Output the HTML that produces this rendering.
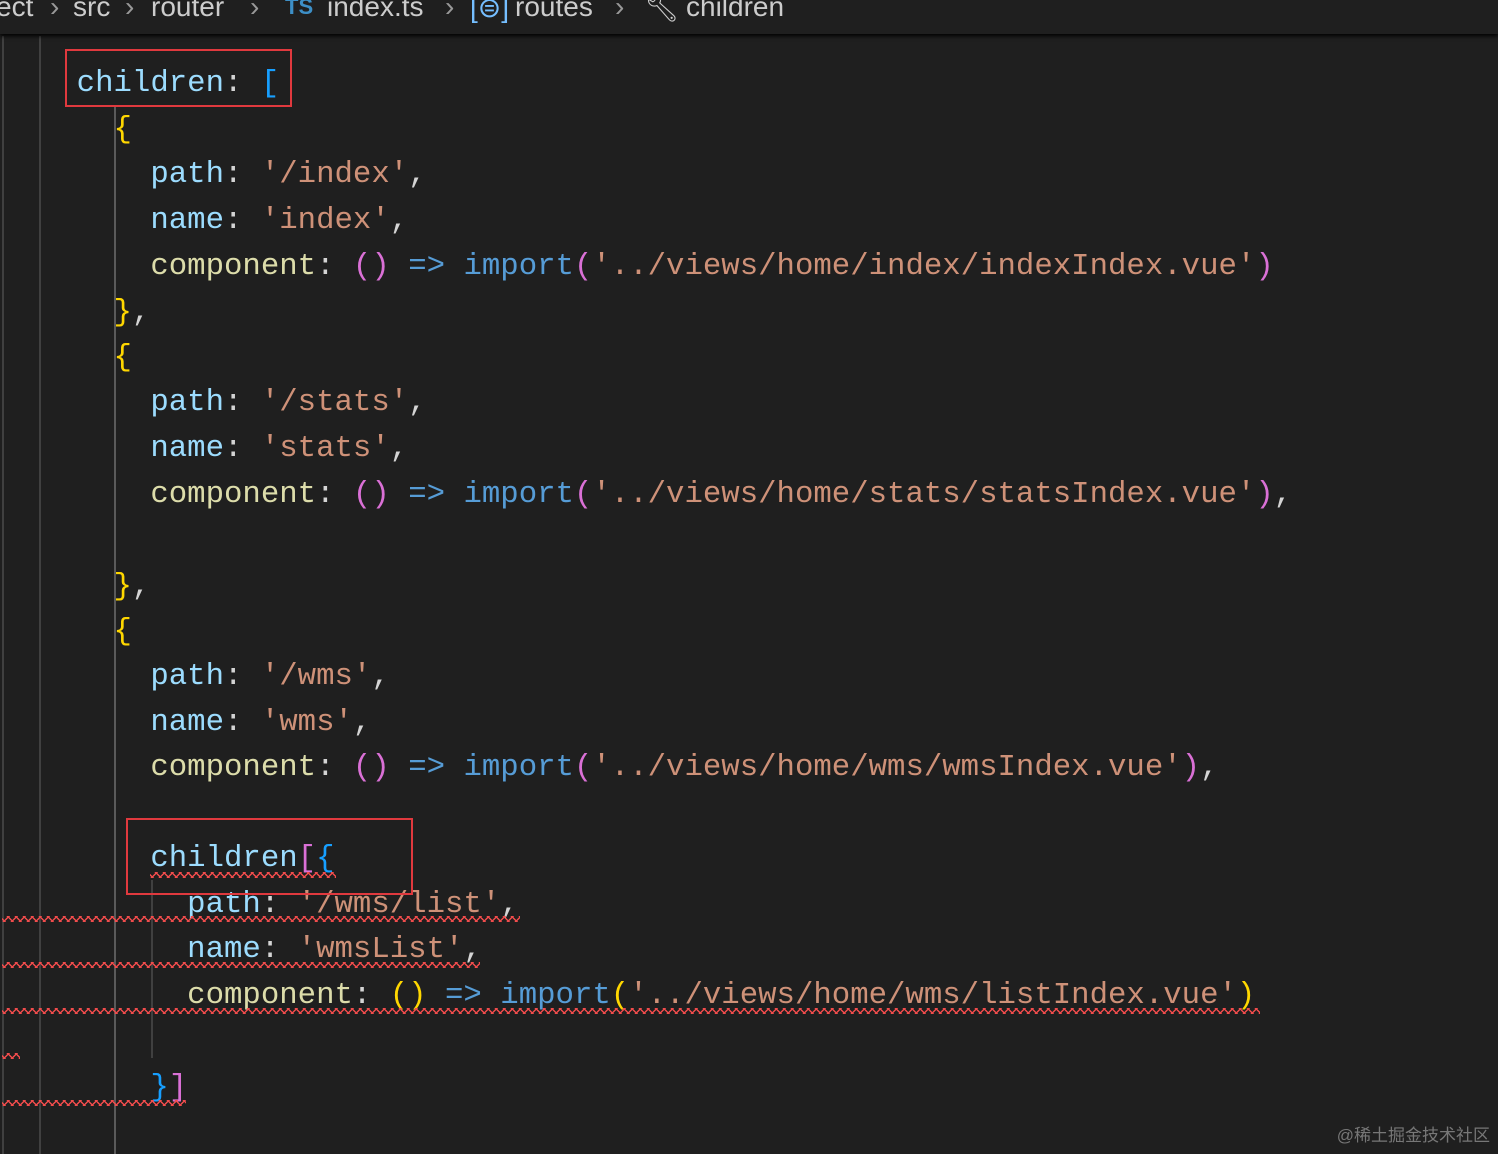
<!DOCTYPE html>
<html><head><meta charset="utf-8"><style>
body{margin:0;width:1498px;height:1154px;background:#1f1f1f;overflow:hidden;position:relative;font-family:"Liberation Mono",monospace}
.bar{position:absolute;left:0;top:0;width:1498px;height:34px;background:#1f1f1f;box-shadow:0 2px 4px #000;font-family:"Liberation Sans",sans-serif;font-size:28px;color:#cccccc;white-space:nowrap;z-index:2}
.bar span{position:absolute;top:-9px}
.l{position:absolute;left:0;font-size:30.7px;line-height:46px;white-space:pre;color:#d4d4d4}
.g{position:absolute;width:2px;background:#404040;top:36px;bottom:0}
.k{color:#9cdcfe}.s{color:#ce9178}.y{color:#ffd700}.p{color:#da70d6}.b{color:#179fff}.kw{color:#569cd6}.f{color:#dcdcaa}
.box{position:absolute;border:2px solid #e0393e}
.sq{position:absolute;height:6px;background:linear-gradient(135deg,transparent 45%,#f14c4c 45% 60%,transparent 60%) 0 0/8px 6px repeat-x,linear-gradient(45deg,transparent 45%,#f14c4c 45% 60%,transparent 60%) 4px 0/8px 6px repeat-x}
.wm{position:absolute;right:8px;bottom:8px;font-family:"Liberation Sans","Noto Sans CJK SC",sans-serif;font-size:17px;color:#777}
</style></head><body>
<div class="bar">
<span style="left:-4px">ect</span><span style="left:50px;color:#999">›</span>
<span style="left:73px">src</span><span style="left:125px;color:#999">›</span>
<span style="left:151px">router</span><span style="left:250px;color:#999">›</span>
<span style="left:285px;color:#3d8fc6;font-weight:bold;font-size:22px;top:-6px">TS</span>
<span style="left:327px">index.ts</span><span style="left:445px;color:#999">›</span>
<span style="left:470px;color:#75beff">[⊜]</span>
<span style="left:515px">routes</span><span style="left:615px;color:#999">›</span>
<span style="left:644px">🔧︎</span>
<span style="left:686px">children</span>
</div>
<div class="g" style="left:2px"></div>
<div class="g" style="left:39px"></div>
<div class="g" style="left:114px;top:105px;background:#5a5a5a"></div>
<div class="g" style="left:151px;top:880px;bottom:96px"></div>

<div class="l" style="left:3px;top:61px">    <span class="k">children</span>: <span class="b">[</span></div>
<div class="l" style="left:3px;top:107px">      <span class="y">{</span></div>
<div class="l" style="left:3px;top:152px">        <span class="k">path</span>: <span class="s">'/index'</span>,</div>
<div class="l" style="left:3px;top:198px">        <span class="k">name</span>: <span class="s">'index'</span>,</div>
<div class="l" style="left:3px;top:244px">        <span class="f">component</span>: <span class="p">()</span> <span class="kw">=&gt;</span> <span class="kw">import</span><span class="p">(</span><span class="s">'../views/home/index/indexIndex.vue'</span><span class="p">)</span></div>
<div class="l" style="left:3px;top:290px">      <span class="y">}</span>,</div>
<div class="l" style="left:3px;top:335px">      <span class="y">{</span></div>
<div class="l" style="left:3px;top:380px">        <span class="k">path</span>: <span class="s">'/stats'</span>,</div>
<div class="l" style="left:3px;top:426px">        <span class="k">name</span>: <span class="s">'stats'</span>,</div>
<div class="l" style="left:3px;top:472px">        <span class="f">component</span>: <span class="p">()</span> <span class="kw">=&gt;</span> <span class="kw">import</span><span class="p">(</span><span class="s">'../views/home/stats/statsIndex.vue'</span><span class="p">)</span>,</div>
<div class="l" style="left:3px;top:564px">      <span class="y">}</span>,</div>
<div class="l" style="left:3px;top:609px">      <span class="y">{</span></div>
<div class="l" style="left:3px;top:654px">        <span class="k">path</span>: <span class="s">'/wms'</span>,</div>
<div class="l" style="left:3px;top:700px">        <span class="k">name</span>: <span class="s">'wms'</span>,</div>
<div class="l" style="left:3px;top:745px">        <span class="f">component</span>: <span class="p">()</span> <span class="kw">=&gt;</span> <span class="kw">import</span><span class="p">(</span><span class="s">'../views/home/wms/wmsIndex.vue'</span><span class="p">)</span>,</div>
<div class="l" style="left:3px;top:836px">        <span class="k">children</span><span class="p">[</span><span class="b">{</span></div>
<div class="l" style="left:3px;top:882px">          <span class="k">path</span>: <span class="s">'/wms/list'</span>,</div>
<div class="l" style="left:3px;top:927px">          <span class="k">name</span>: <span class="s">'wmsList'</span>,</div>
<div class="l" style="left:3px;top:973px">          <span class="f">component</span>: <span class="y">()</span> <span class="kw">=&gt;</span> <span class="kw">import</span><span class="y">(</span><span class="s">'../views/home/wms/listIndex.vue'</span><span class="y">)</span></div>
<div class="l" style="left:3px;top:1065px">        <span class="b">}</span><span class="p">]</span></div>

<div class="box" style="left:65px;top:49px;width:223px;height:54px"></div>
<div class="box" style="left:126px;top:818px;width:283px;height:73px"></div>
<div class="sq" style="left:150px;top:872px;width:186px"></div>
<div class="sq" style="left:2px;top:916px;width:518px"></div>
<div class="sq" style="left:2px;top:962px;width:478px"></div>
<div class="sq" style="left:2px;top:1008px;width:1258px"></div>
<div class="sq" style="left:2px;top:1053px;width:18px"></div>
<div class="sq" style="left:2px;top:1100px;width:184px"></div>
<div class="wm">@稀土掘金技术社区</div>
</body></html>
